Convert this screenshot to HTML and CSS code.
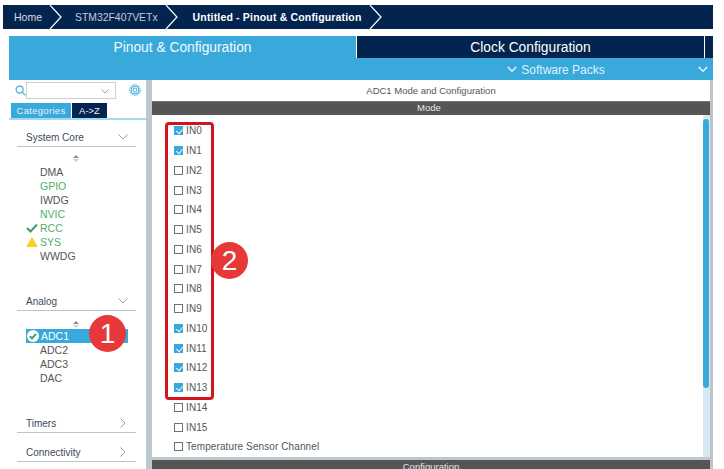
FILE: index.html
```html
<!DOCTYPE html>
<html lang="en">
<head>
<meta charset="utf-8">
<title>Pinout &amp; Configuration</title>
<link rel="stylesheet" href="styles.css">
</head>
<body>
<div class="page">
  <nav class="crumbs">
    <span class="crumb c-home">Home</span>
    <svg class="chev" viewBox="0 0 14 24"><path d="M1 0l11 12L1 24"/></svg>
    <span class="crumb c-mcu">STM32F407VETx</span>
    <svg class="chev" viewBox="0 0 14 24"><path d="M1 0l11 12L1 24"/></svg>
    <span class="crumb c-cur">Untitled - Pinout &amp; Configuration</span>
    <svg class="chev" viewBox="0 0 14 24"><path d="M1 0l11 12L1 24"/></svg>
  </nav>
  <div class="app">
    <div class="tabs">
      <div class="tab tab-on">Pinout &amp; Configuration</div>
      <div class="tab tab-off">Clock Configuration</div>
      <div class="tab-end"></div>
    </div>
    <div class="packs">
      <div class="packs-label">
        <svg class="pchev" viewBox="0 0 12 8"><path d="M1 1l5 5 5-5"/></svg>
        <span>Software Packs</span>
      </div>
      <svg class="pchev pchev-end" viewBox="0 0 12 8"><path d="M1 1l5 5 5-5"/></svg>
    </div>
    <div class="work">
      <aside class="side">
        <div class="search">
          <svg class="mag" viewBox="0 0 12 12"><circle cx="5" cy="5" r="3.8"/><path d="M8 8l3.4 3.4"/></svg>
          <div class="combo"><svg class="combo-chev" viewBox="0 0 8 5"><path d="M.5.5L4 4 7.500.5"/></svg></div>
          <svg class="gear" viewBox="0 0 14 14"><circle cx="7" cy="7" r="5.300" stroke-dasharray="1.700 .8"/><circle cx="7" cy="7" r="4"/><circle cx="7" cy="7" r="2"/></svg>
        </div>
        <div class="cat-tabs">
          <span class="ct ct-on">Categories</span>
          <span class="ct ct-off">A-&gt;Z</span>
        </div>
        <div class="cat-list">
          <div class="cat cat-sys">
            <div class="cat-head"><span>System Core</span><svg class="cchev" viewBox="0 0 10 6"><path d="M.5.5L5 5 9.500.5"/></svg></div>
            <div class="sort"><i class="up"></i><i class="down"></i></div>
            <ul class="items">
              <li>DMA</li>
              <li class="g">GPIO</li>
              <li>IWDG</li>
              <li class="g">NVIC</li>
              <li class="g"><svg class="mark" viewBox="0 0 12 10"><path class="tick" d="M1 5l3.500 3.500L11 1.500"/></svg>RCC</li>
              <li class="g"><svg class="mark" viewBox="0 0 12 10"><path class="warn" d="M6 0l6 10H0z"/></svg>SYS</li>
              <li>WWDG</li>
            </ul>
          </div>
          <div class="cat cat-ana">
            <div class="cat-head"><span>Analog</span><svg class="cchev" viewBox="0 0 10 6"><path d="M.5.5L5 5 9.500.5"/></svg></div>
            <div class="sort sort-ana"><i class="up"></i><i class="down"></i></div>
            <ul class="items items-ana">
              <li class="sel"><svg class="okc" viewBox="0 0 12 12"><circle cx="6" cy="6" r="6"/><path d="M2.800 6.200l2.200 2.200 4-4.400"/></svg>ADC1</li>
              <li>ADC2</li>
              <li>ADC3</li>
              <li>DAC</li>
            </ul>
          </div>
          <div class="cat cat-tim">
            <div class="cat-head"><span>Timers</span><svg class="cchev cchev-r" viewBox="0 0 6 10"><path d="M.5.5L5 5 .5 9.500"/></svg></div>
          </div>
          <div class="cat cat-con">
            <div class="cat-head"><span>Connectivity</span><svg class="cchev cchev-r" viewBox="0 0 6 10"><path d="M.5.5L5 5 .5 9.500"/></svg></div>
          </div>
        </div>
      </aside>
      <main class="main">
        <div class="title">ADC1 Mode and Configuration</div>
        <div class="bar bar-mode">Mode</div>
        <div class="mode-body">
          <div class="channels">
            <label class="ch on"><i class="box"></i>IN0</label>
            <label class="ch on"><i class="box"></i>IN1</label>
            <label class="ch"><i class="box"></i>IN2</label>
            <label class="ch"><i class="box"></i>IN3</label>
            <label class="ch"><i class="box"></i>IN4</label>
            <label class="ch"><i class="box"></i>IN5</label>
            <label class="ch"><i class="box"></i>IN6</label>
            <label class="ch"><i class="box"></i>IN7</label>
            <label class="ch"><i class="box"></i>IN8</label>
            <label class="ch"><i class="box"></i>IN9</label>
            <label class="ch on"><i class="box"></i>IN10</label>
            <label class="ch on"><i class="box"></i>IN11</label>
            <label class="ch on"><i class="box"></i>IN12</label>
            <label class="ch on"><i class="box"></i>IN13</label>
            <label class="ch"><i class="box"></i>IN14</label>
            <label class="ch"><i class="box"></i>IN15</label>
            <label class="ch"><i class="box"></i>Temperature Sensor Channel</label>
          </div>
          <div class="scroll"><div class="thumb"></div></div>
        </div>
        <div class="bar bar-conf">Configuration</div>
      </main>
    </div>
  </div>
  <div class="redbox"></div>
  <div class="badge b1">1</div>
  <div class="badge b2">2</div>
</div>
</body>
</html>
```
FILE: styles.css
```css
* { box-sizing: border-box; }
html, body { margin: 0; background: #fff; }
body { font-family: "Liberation Sans", Arial, sans-serif; overflow: hidden; }
.page { position: relative; width: 724px; height: 469px; overflow: hidden; padding-top: 5px; }

.crumbs { display: flex; align-items: center; width: 710px; height: 24px; margin-left: 3px; background: #03244e; color: #d5dde6; font-size: 10.500px; }
.crumb { white-space: nowrap; }
.c-home { margin-left: 11px; }
.c-mcu { margin-left: 12px; color: #c3ccd6; font-size: 10.400px; }
.c-cur { margin-left: 14px; font-weight: 700; color: #fff; letter-spacing: .17px; }
.chev { width: 14px; height: 24px; margin-left: 7px; fill: none; stroke: #fff; stroke-width: 1.200; }

.app { margin: 7px 0 0 9px; width: 704px; }
.tabs { display: flex; height: 22px; background: #03244e; }
.tab { display: flex; align-items: center; justify-content: center; font-size: 13.800px; color: #fff; }
.tab-on { width: 347px; background: #39a9dc; color: #f2f9fd; }
.tab-off { width: 348px; border-left: 1px solid #fff; }
.tab-end { width: 9px; border-left: 1px solid #fff; }
.packs { position: relative; display: flex; align-items: center; justify-content: center; height: 22px; padding-top: 1px; background: #39a9dc; color: #dff1fa; font-size: 12px; padding-left: 347px; }
.packs-label { display: flex; align-items: center; gap: 4px; margin-left: 43px; }
.pchev { width: 10px; height: 7px; fill: none; stroke: #eef8fc; stroke-width: 1.700; }
.pchev-end { position: absolute; right: 5px; top: 8px; }

.work { display: flex; height: 400px; }
.side { width: 137px; flex: none; background: #fff; }
.search { display: flex; align-items: center; height: 18px; margin-top: 1px; padding-left: 6px; }
.mag { width: 11px; height: 11px; fill: none; stroke: #39a9dc; stroke-width: 1.300; }
.combo { position: relative; width: 90px; height: 17px; border: 1px solid #cfcfcf; }
.combo-chev { position: absolute; right: 6px; top: 6px; width: 8px; height: 5px; fill: none; stroke: #888; stroke-width: .8; }
.gear { width: 14px; height: 14px; margin-left: 12px; fill: none; stroke: #39a9dc; stroke-width: 1; }
.cat-tabs { display: flex; gap: 1px; height: 15px; margin: 4px 0 0 2px; font-size: 9.500px; }
.ct { display: flex; align-items: center; justify-content: center; color: #e6f3fa; }
.ct-on { width: 60px; background: #39a9dc; letter-spacing: .3px; }
.ct-off { width: 35px; background: #03244e; }
.cat-list { height: 343px; border-top: 2px solid #a4d8f0; padding: 0 10px 0 8px; }
.cat-head { display: flex; justify-content: space-between; align-items: flex-end; height: 27px; padding: 0 8px 3px 9px; border-bottom: 1px solid #bcc4ca; color: #3b4a5c; font-size: 10px; }
.cat-ana { margin-top: 21px; }
.cat-tim { margin-top: 21px; }
.cat-con { margin-top: 2px; }
.cchev { width: 10px; height: 6px; margin-bottom: 3px; fill: none; stroke: #8a9298; stroke-width: .9; }
.cchev-r { width: 6px; height: 10px; margin-right: 2px; margin-bottom: 1px; }
.sort { display: flex; flex-direction: column; align-items: center; gap: 1px; width: 118px; margin-top: 8px; }
.sort i { display: block; width: 0; height: 0; border-left: 3px solid transparent; border-right: 3px solid transparent; }
.up { border-bottom: 3px solid #8c8c8c; }
.down { border-top: 3px solid #d0d0d0; }
.sort-ana { margin-top: 10px; }
.items { list-style: none; margin: 3px 0 0; padding: 0; font-size: 10.500px; color: #555; }
.items li { position: relative; height: 14px; line-height: 14px; padding-left: 23px; }
.items .g { color: #4fae6a; }
.mark { position: absolute; left: 9px; top: 2px; width: 12px; height: 10px; }
.tick { fill: none; stroke: #3f9f65; stroke-width: 2; }
.warn { fill: #f7cf1f; }
.items-ana { margin-top: 1px; margin-left: 9px; width: 102px; }
.items-ana li { padding-left: 14px; }
.items-ana .sel { padding-left: 15px; background: #39a9dc; color: #fff; }
.okc { position: absolute; left: 1px; top: 1px; width: 12px; height: 12px; }
.okc circle { fill: #fff; }
.okc path { fill: none; stroke: #3f9f65; stroke-width: 2; }

.main { display: flex; flex-direction: column; width: 567px; flex: none; height: 400px; border-left: 6px solid #bcc8d0; border-right: 3px solid #bcc4ca; }
.title { height: 21px; line-height: 21px; text-align: center; font-size: 9.500px; color: #555; }
.bar { flex: none; background: #555; color: #e8e8e8; font-size: 9.500px; text-align: center; }
.bar-mode { height: 14px; border-top: 1px solid #777; line-height: 12px; padding-right: 4px; }
.mode-body { display: flex; height: 345px; border-bottom: 3px solid #bcc8d0; }
.channels { flex: 1; padding-top: 6px; padding-left: 22px; }
.ch { display: flex; align-items: center; height: 19.750px; font-size: 10px; color: #555; letter-spacing: .1px; white-space: nowrap; }
.box { position: relative; width: 9px; height: 9px; margin-right: 3px; border: 1px solid #707070; background: #fff; }
.ch.on .box { border-color: #39a9dc; background: #39a9dc; }
.ch.on .box::after { content: ""; position: absolute; left: 1.500px; top: 0; width: 4px; height: 6px; border: solid #fff; border-width: 0 1.300px 1.300px 0; transform: rotate(40deg) scale(.85); }
.scroll { position: relative; flex: none; width: 7px; background: #d8e8f2; }
.thumb { position: absolute; left: 0; top: 4px; width: 6px; height: 269px; border-radius: 3px; background: #39a9dc; }
.bar-conf { height: 20px; line-height: 13px; }

.redbox { position: absolute; left: 165px; top: 122px; width: 49px; height: 278px; border: 3px solid #d4141c; border-radius: 4px; }
.badge { position: absolute; width: 37px; height: 37px; border-radius: 50%; background: #e63838; color: #fff; font-size: 28px; line-height: 37px; text-align: center; }
.b1 { left: 89px; top: 315px; }
.b2 { left: 211px; top: 242px; }
```
